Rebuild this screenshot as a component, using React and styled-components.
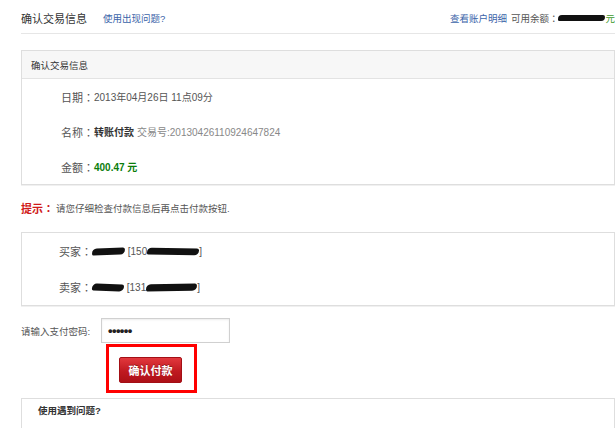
import React from 'react';
import styled, { createGlobalStyle } from 'styled-components';

const GlobalStyle = createGlobalStyle`
    body{
        margin:0;
        background:#fff;
        font-family:"Liberation Sans","Noto Sans CJK SC",sans-serif;
        color:#555;
    }
`

const Page = styled.div`
    width:615px;
    height:428px;
    overflow:hidden;
    padding-left:21px;
    box-sizing:border-box;
`

const TopBar = styled.div`
    display:flex;
    align-items:center;
    height:34px;
    padding-top:3px;
    box-sizing:border-box;
    border-bottom:1px solid #e6e6e6;
    font-size:9.5px;
`

const Title = styled.span`
    font-size:11px;
    color:#333;
    margin-right:16px;
`

const BlueLink = styled.a`
    color:#3b64a9;
    text-decoration:none;
    cursor:pointer;
    margin-right:${p => p.$mr || 0}px;
`

const Right = styled.div`
    margin-left:auto;
    display:flex;
    align-items:center;
    color:#555;
`

// centred full-width colon, as the original page font draws it
const Colon = styled.span`
    font-family:"Noto Sans CJK TC",sans-serif;
`

const Blob = styled.span`
    display:inline-block;
    width:${p => p.$w}px;
    height:${p => p.$h || 6}px;
    background:#111;
    border-radius:${p => p.$h || 6}px 3px ${p => p.$h || 6}px 2px;
    margin:0 ${p => p.$m || 0}px;
    vertical-align:middle;
    transform:rotate(${p => p.$r || 0}deg);
`

const Yuan = styled.span`
    color:#3d9a2a;
`

const Box = styled.div`
    border:1px solid #dedede;
    box-shadow:0 1px 0 #f0f0f0;
    margin-top:${p => p.$mt}px;
`

const BoxHead = styled.div`
    display:flex;
    align-items:center;
    height:${p => p.$h || 27}px;
    padding-left:${p => p.$pl || 9}px;
    background:${p => p.$plain ? '#fff' : '#f7f7f7'};
    border-bottom:${p => p.$plain ? 'none' : '1px solid #e3e3e3'};
    font-size:9.5px;
    font-weight:${p => p.$bold ? 700 : 400};
    color:#333;
`

const Row = styled.div`
    display:flex;
    align-items:center;
    height:${p => p.$h}px;
    padding-left:${p => p.$indent}px;
    font-size:10px;
    color:#555;
    white-space:nowrap;
`

const Label = styled.span`
    font-size:11px;
    color:#555;
`

const Strong = styled.b`
    color:#333;
    margin-right:3px;
`

const Muted = styled.span`
    color:#888;
`

const Money = styled.b`
    color:#0b7d0b;
`

const Tip = styled.div`
    display:flex;
    align-items:center;
    height:20px;
    margin-top:13px;
    font-size:9.5px;
    color:#555;
    b{
        color:#d01a1a;
        font-size:11px;
        margin-right:2px;
    }
`

const PassRow = styled.div`
    display:flex;
    align-items:center;
    margin-top:12px;
`

const PassLabel = styled.span`
    width:80px;
    font-size:9.5px;
    color:#555;
`

const PassInput = styled.div`
    width:129px;
    height:25px;
    box-sizing:border-box;
    border:1px solid #d0d0d0;
    box-shadow:inset 0 1px 2px rgba(0,0,0,0.08);
    display:flex;
    align-items:center;
    padding:0 0 1px 6px;
    font-size:13px;
    font-weight:700;
    letter-spacing:-0.6px;
    color:#222;
`

const Highlight = styled.div`
    display:inline-block;
    margin:1px 0 0 85px;
    border:3px solid #f00;
    padding:10px 12px 7px 10px;
`

const PayButton = styled.button`
    display:block;
    width:63px;
    height:26px;
    padding:0;
    border:1px solid #a30f15;
    border-radius:2px;
    background:linear-gradient(#e2383d, #c01a21 55%, #ad1017);
    color:#fff;
    font-family:"Noto Sans CJK SC",sans-serif;
    font-size:11px;
    font-weight:700;
    text-shadow:0 -1px 0 rgba(0,0,0,0.3);
    cursor:pointer;
`

const App = () => {
  return (
    <Page>
        <GlobalStyle />
        <TopBar>
            <Title>确认交易信息</Title>
            <BlueLink>使用出现问题?</BlueLink>
            <Right>
                <BlueLink $mr={4}>查看账户明细</BlueLink>
                <span>可用余额<Colon>：</Colon></span>
                <Blob $w={47} $h={6} />
                <Yuan>元</Yuan>
            </Right>
        </TopBar>

        <Box $mt={16}>
            <BoxHead>确认交易信息</BoxHead>
            <Row $h={35} $indent={39}>
                <Label>日期<Colon>：</Colon></Label>2013年04月26日 11点09分
            </Row>
            <Row $h={35} $indent={39}>
                <Label>名称<Colon>：</Colon></Label><Strong>转账付款</Strong><Muted>交易号:20130426110924647824</Muted>
            </Row>
            <Row $h={35} $indent={39}>
                <Label>金额<Colon>：</Colon></Label><Money>400.47 元</Money>
            </Row>
        </Box>

        <Tip><b>提示<Colon>：</Colon></b>请您仔细检查付款信息后再点击付款按钮.</Tip>

        <Box $mt={14}>
            <Row $h={36} $indent={37}>
                <Label>买家<Colon>：</Colon></Label><Blob $w={33} $h={7} $r={-2} />&nbsp;[150<Blob $w={52} $h={7} $r={1} />]
            </Row>
            <Row $h={36} $indent={37}>
                <Label>卖家<Colon>：</Colon></Label><Blob $w={32} $h={7} $r={2} />&nbsp;[131<Blob $w={51} $h={7} $r={-1} />]
            </Row>
        </Box>

        <PassRow>
            <PassLabel>请输入支付密码:</PassLabel>
            <PassInput>••••••</PassInput>
        </PassRow>

        <Highlight>
            <PayButton>确认付款</PayButton>
        </Highlight>

        <Box $mt={5}>
            <BoxHead $plain $bold $pl={16} $h={22}>使用遇到问题?</BoxHead>
            <Row $h={40} $indent={16} />
        </Box>
    </Page>
  )
}

export default App
